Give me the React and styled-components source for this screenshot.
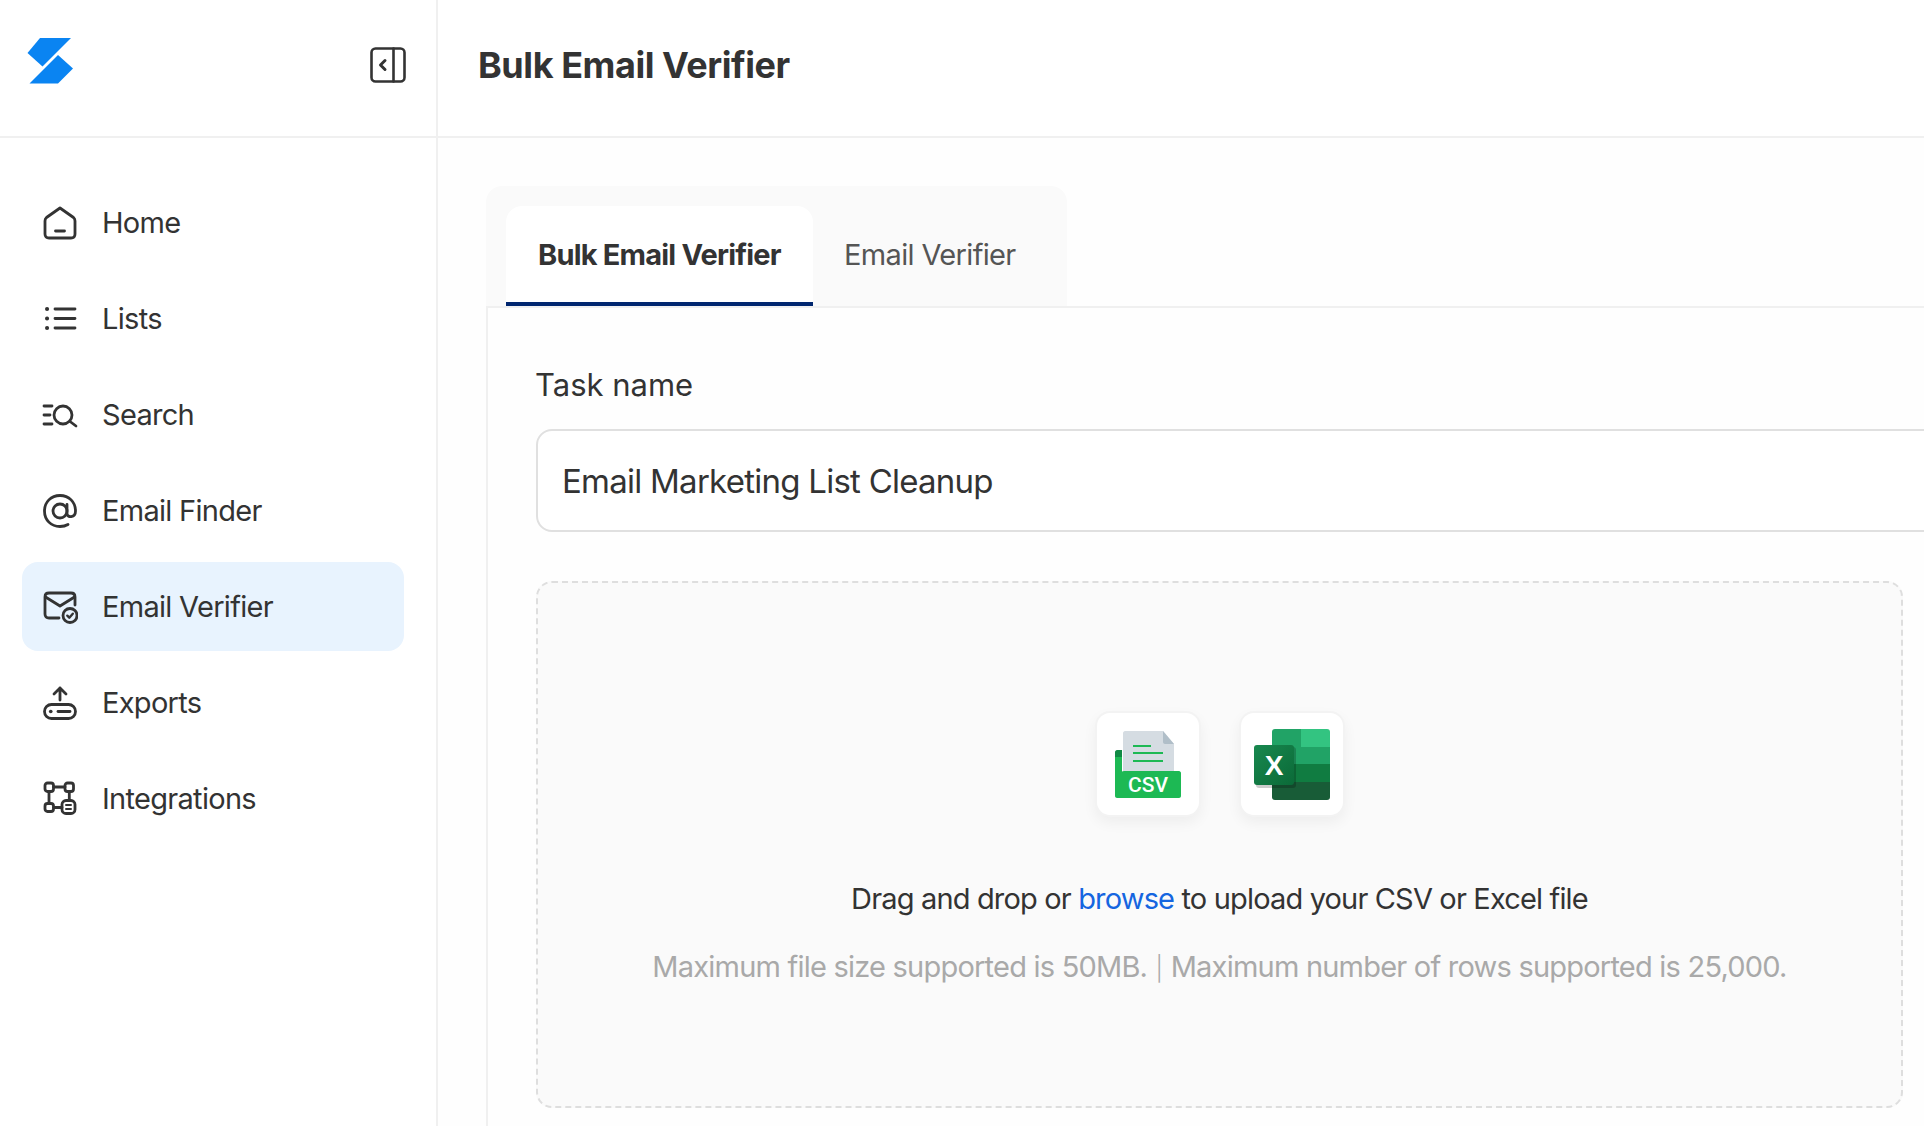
import React from 'react'
import styled, { createGlobalStyle } from 'styled-components'

const GlobalStyle = createGlobalStyle`
  html, body {
    margin: 0;
    height: 100%;
    overflow: hidden;
    background: #fff;
  }
  * { box-sizing: border-box; }
`

const Page = styled.div`
  display: flex;
  width: 1924px;
  height: 1126px;
  overflow: hidden;
  font-family: Inter, "Liberation Sans", sans-serif;
  color: #333;
`

const Sidebar = styled.aside`
  flex: 0 0 438px;
  border-right: 2px solid #f0f0f0;
`

const SidebarHead = styled.div`
  height: 138px;
  padding: 0 30px 6px 27px;
  display: flex;
  align-items: center;
  justify-content: space-between;
  border-bottom: 2px solid #f0f0f0;
`

const LogoMark = styled.svg`
  margin-bottom: 8px;
`

const Nav = styled.nav`
  display: flex;
  flex-direction: column;
  gap: 7px;
  padding: 40px 32px 0 22px;
`

const NavItem = styled.div`
  height: 89px;
  padding-left: 20px;
  display: flex;
  align-items: center;
  gap: 24px;
  border-radius: 16px;
  font-size: 29px;
  letter-spacing: -0.7px;
  background: ${({ $active }) => ($active ? '#e8f3fe' : 'transparent')};
`

const Main = styled.main`
  flex: 1;
  min-width: 0;
  overflow: hidden;
  background: #fefefe;
`

const Header = styled.header`
  height: 138px;
  padding: 0 0 6px 40px;
  display: flex;
  align-items: center;
  background: #fff;
  border-bottom: 2px solid #f0f0f0;
`

const Title = styled.h1`
  margin: 0;
  font-size: 36px;
  font-weight: 700;
  letter-spacing: -0.45px;
`

const Content = styled.div`
  padding: 48px 0 0 48px;
`

const TabStrip = styled.div`
  width: 581px;
  height: 120px;
  padding: 20px 0 0 20px;
  display: flex;
  background: #fafafa;
  border-radius: 16px 16px 0 0;
`

const Tab = styled.div`
  width: ${({ $active }) => ($active ? '307px' : 'auto')};
  height: 100px;
  padding-left: ${({ $active }) => ($active ? '32px' : '31px')};
  display: flex;
  align-items: center;
  font-size: 29px;
  font-weight: ${({ $active }) => ($active ? 700 : 400)};
  letter-spacing: ${({ $active }) => ($active ? '-0.8px' : '-0.65px')};
  color: ${({ $active }) => ($active ? '#333' : '#555')};
  background: ${({ $active }) => ($active ? '#fff' : 'transparent')};
  border-radius: 16px 16px 0 0;
  border-bottom: 4px solid ${({ $active }) => ($active ? '#00266f' : 'transparent')};
`

const Panel = styled.section`
  width: 1500px;
  height: 820px;
  padding: 57px 0 0 48px;
  border-top: 2px solid #f0f0f0;
  border-left: 2px solid #f0f0f0;
`

const Label = styled.div`
  font-size: 31px;
  line-height: 40px;
  margin-left: -1px;
`

const TaskInput = styled.div`
  width: 1500px;
  height: 103px;
  margin-top: 24px;
  padding-left: 24px;
  display: flex;
  align-items: center;
  border: 2px solid #e0e0e0;
  border-radius: 16px;
  background: #fff;
  font-size: 33px;
  letter-spacing: -0.75px;
`

const DropZone = styled.div`
  width: 1367px;
  height: 527px;
  margin-top: 49px;
  padding-top: 128px;
  display: flex;
  flex-direction: column;
  align-items: center;
  background: #fafafa;
  border: 2px dashed #dedede;
  border-radius: 16px;
`

const FileIcons = styled.div`
  display: flex;
  gap: 38px;
`

const FileCard = styled.div`
  width: 106px;
  height: 106px;
  display: flex;
  align-items: center;
  justify-content: center;
  background: #fff;
  border: 2px solid #f3f3f3;
  border-radius: 15px;
  box-shadow: 0 6px 14px rgba(0, 0, 0, 0.05);
`

const DropText = styled.div`
  margin-top: 62px;
  font-size: 29px;
  line-height: 40px;
  letter-spacing: -0.84px;
`

const Browse = styled.span`
  color: #1565e0;
`

const Hint = styled.div`
  margin-top: 28px;
  font-size: 29px;
  line-height: 40px;
  letter-spacing: -0.78px;
  color: #a9a9a9;
`

const Pipe = styled.span`
  font-size: 24px;
  font-weight: 300;
  margin: 0 1px;
`

const Icon = ({ children }) => (
  <svg width="36" height="36" viewBox="0 0 36 36" fill="none" stroke="#333" strokeWidth="2.8" strokeLinecap="round" strokeLinejoin="round">
    { children }
  </svg>
)

const Logo = () => (
  <LogoMark width="46" height="46" viewBox="0 0 46 46">
    <path fill="#0a84f2" d="M13 0H44L15.500 28.500L0.500 15Z" />
    <path fill="#0a84f2" d="M31 17L46 30.500L31 45.500H2.500Z" />
  </LogoMark>
)

const CollapseIcon = () => (
  <svg width="36" height="36" viewBox="0 0 36 36" fill="none" stroke="#333" strokeWidth="2.6" strokeLinecap="round" strokeLinejoin="round">
    <rect x="1.500" y="1.500" width="33" height="33" rx="4" />
    <path d="M23.500 1.500V34.500" />
    <path strokeWidth="3" d="M15 13.500L10.500 18L15 22.500" />
  </svg>
)

const HomeIcon = () => (
  <Icon>
    <path d="M18 3L31.500 12.500C32.700 13.500 33 14.500 33 16V29C33 31.500 31.500 33 29 33H7C4.500 33 3 31.500 3 29V16C3 14.500 3.300 13.500 4.500 12.500Z" />
    <path d="M13.500 26H22.500" />
  </Icon>
)

const ListIcon = () => (
  <Icon>
    <path d="M13 8H33M13 17.500H33M13 27H33" />
    <path strokeWidth="4" d="M5 8H5.100M5 17.500H5.100M5 27H5.100" />
  </Icon>
)

const SearchIcon = () => (
  <Icon>
    <path d="M2 9H10M2 18H8M2 27H10" />
    <circle cx="21" cy="18" r="9" />
    <path d="M28 24.500L34 29" />
  </Icon>
)

const AtIcon = () => (
  <Icon>
    <circle cx="18" cy="18" r="7" />
    <path d="M25 11.500V20.500C25 25 33.500 25 33.500 18C33.500 9 27 2.500 18 2.500C9 2.500 2.500 9 2.500 18C2.500 27 9 33.500 18 33.500C21 33.500 23.500 33 26 31.500" />
  </Icon>
)

const VerifyIcon = () => (
  <Icon>
    <path d="M17 29H7C4.500 29 3 27.500 3 25V8C3 5.500 4.500 4 7 4H29C31.500 4 33 5.500 33 8V16" />
    <path d="M3.500 8L18 17L32.500 8" />
    <circle cx="28" cy="26.500" r="7" />
    <path strokeWidth="2.400" d="M25.300 26.700L27.300 28.700L30.800 24.700" />
  </Icon>
)

const ExportIcon = () => (
  <Icon>
    <path d="M18 3V15M12 9L18 3L24 9" />
    <rect x="2.500" y="19.500" width="31" height="14" rx="7" />
    <path d="M16 26.500H28" />
    <path strokeWidth="3.600" d="M8.700 26.500H8.800" />
  </Icon>
)

const IntegrationIcon = () => (
  <Icon>
    <rect x="3" y="2" width="8.500" height="8.500" rx="2.500" />
    <rect x="23" y="2" width="8.500" height="8.500" rx="2.500" />
    <rect x="3" y="22.500" width="8.500" height="8" rx="2.500" />
    <rect x="20" y="19.500" width="13" height="13" rx="4" />
    <path d="M11.500 6H23M7 10.500V22.500M27.300 10.500V19.500M11.500 26.500H20" />
    <path strokeWidth="2" d="M24 24H29M24 28H29" />
  </Icon>
)

const CsvIcon = () => (
  <svg width="66" height="68" viewBox="0 0 66 68">
    <path fill="#118a45" d="M2 20H7V28H0V22C0 21 1 20 2 20Z" />
    <path fill="#d5dce2" d="M10 1C9 1 8 2 8 3V42H59V14L48 1Z" />
    <path fill="#b0bec8" d="M48 1L59 14H50C49 14 48 13 48 12Z" />
    <path stroke="#1db954" strokeWidth="2" d="M18 16H36M18 23H48M18 31H48" />
    <path fill="#1db954" d="M0 27H7V41C7 42 8 41 9 41H64C65 41 66 42 66 43V66C66 67 65 68 64 68H2C1 68 0 67 0 66Z" />
    <text x="33" y="62" fill="#fff" fontFamily="Roboto, sans-serif" fontWeight="500" fontSize="21" textAnchor="middle">CSV</text>
  </svg>
)

const ExcelIcon = () => (
  <svg width="76" height="71" viewBox="0 0 76 71">
    <defs>
      <clipPath id="sheet"><rect x="18" y="0" width="58" height="71" rx="3" /></clipPath>
      <linearGradient id="tile" x1="0" y1="0" x2="1" y2="1">
        <stop offset="0" stopColor="#18884f" />
        <stop offset="1" stopColor="#0b6a38" />
      </linearGradient>
    </defs>
    <g clipPath="url(#sheet)">
      <rect x="18" y="0" width="30" height="36" fill="#21a366" />
      <rect x="47" y="0" width="29" height="18" fill="#33c481" />
      <rect x="47" y="18" width="29" height="18" fill="#21a366" />
      <rect x="18" y="35" width="58" height="18" fill="#107c41" />
      <rect x="18" y="53" width="58" height="18" fill="#185c37" />
    </g>
    <rect x="2" y="18" width="40" height="41" rx="3" fill="#000" opacity="0.2" />
    <rect x="0" y="16" width="40" height="40" rx="3" fill="url(#tile)" />
    <text x="20" y="46" fill="#fff" fontFamily="Liberation Sans, sans-serif" fontWeight="700" fontSize="28" textAnchor="middle">X</text>
  </svg>
)

const navItems = [
  { label: 'Home', icon: <HomeIcon /> },
  { label: 'Lists', icon: <ListIcon /> },
  { label: 'Search', icon: <SearchIcon /> },
  { label: 'Email Finder', icon: <AtIcon /> },
  { label: 'Email Verifier', icon: <VerifyIcon />, active: true },
  { label: 'Exports', icon: <ExportIcon /> },
  { label: 'Integrations', icon: <IntegrationIcon /> }
]

const App = () => (
  <Page>
    <GlobalStyle />
    <Sidebar>
      <SidebarHead>
        <Logo />
        <CollapseIcon />
      </SidebarHead>
      <Nav>
        {
          navItems.map(item => (
            <NavItem key={ item.label } $active={ item.active }>
              { item.icon }
              { item.label }
            </NavItem>
          ))
        }
      </Nav>
    </Sidebar>
    <Main>
      <Header>
        <Title>Bulk Email Verifier</Title>
      </Header>
      <Content>
        <TabStrip>
          <Tab $active>Bulk Email Verifier</Tab>
          <Tab>Email Verifier</Tab>
        </TabStrip>
        <Panel>
          <Label>Task name</Label>
          <TaskInput>Email Marketing List Cleanup</TaskInput>
          <DropZone>
            <FileIcons>
              <FileCard><CsvIcon /></FileCard>
              <FileCard><ExcelIcon /></FileCard>
            </FileIcons>
            <DropText>Drag and drop or <Browse>browse</Browse> to upload your CSV or Excel file</DropText>
            <Hint>Maximum file size supported is 50MB. <Pipe>|</Pipe> Maximum number of rows supported is 25,000.</Hint>
          </DropZone>
        </Panel>
      </Content>
    </Main>
  </Page>
)

export default App
